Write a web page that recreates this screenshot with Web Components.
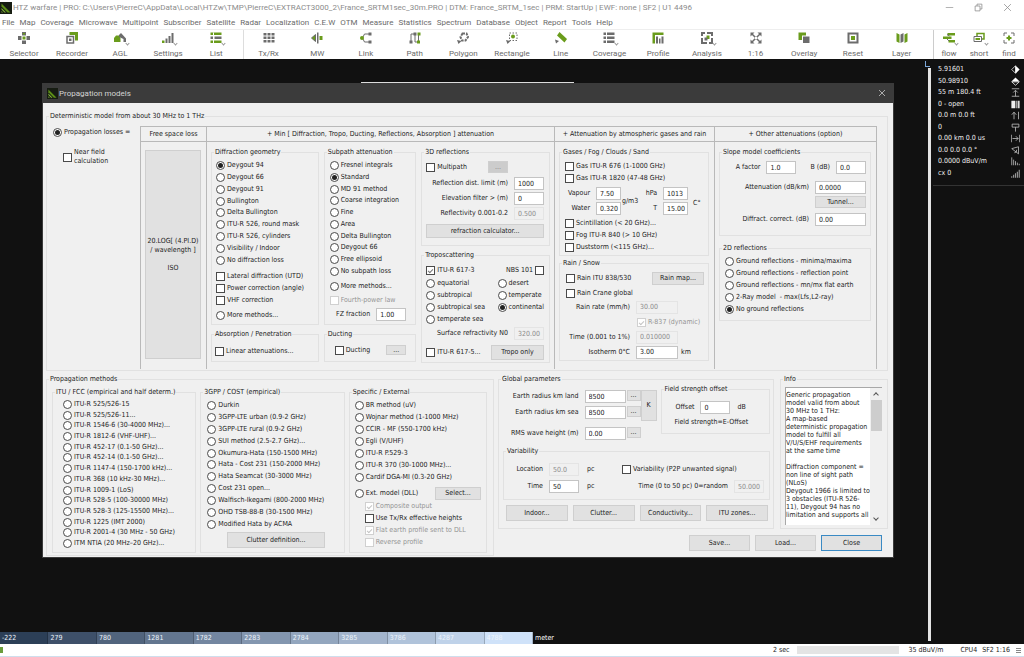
<!DOCTYPE html>
<html lang="en">
<head>
<meta charset="utf-8">
<title>HTZ warfare</title>
<style>
  html, body { margin: 0; height: 100%; background: #111; }
  body { font: 7px/9px "DejaVu Sans Condensed", "DejaVu Sans", sans-serif; color: #1c1c1c; }
</style>
</head>
<body>
<app-shell></app-shell>
<script>
const UI = '8px/11px Roboto, "Noto Sans", sans-serif';
const BASE = `
  *, *::before, *::after { box-sizing: border-box; }
  :host { display: block; }
  :host([hidden]) { display: none; }
  input, button, textarea { font: inherit; color: inherit; margin: 0; }
`;

function define(tag, css, html, init) {
  customElements.define(tag, class extends HTMLElement {
    constructor() {
      super();
      this.attachShadow({ mode: 'open' }).innerHTML = `<style>${BASE}${css}</style>${html}`;
    }
    connectedCallback() {
      if (init) init.call(this, this.shadowRoot);
    }
  });
}

/* ---------- icons ---------- */
const G = '#6a9c1c', D = '#6c6c6c';
const ICONS = {
  logo: `<rect width="24" height="24" fill="#161c12"/><path d="M3 3L21 21H15L3 9Z" fill="#5d8f16"/><path d="M3 12L12 21H9L3 15ZM3 18L6 21H3Z" fill="#86b93a"/>`,
  selector: `<path d="M8 0h8v7H8zM8 17h8v7H8z" fill="${D}"/><path d="M10 2h4v3h-4z" fill="${G}"/><path d="M0 8h7v8H0zM17 8h7v8h-7z" fill="${D}"/><path d="M9 9h6v6H9z" fill="${G}"/>`,
  recorder: `<path d="M7 0h17v17h-6V6H7z" fill="${G}"/><path d="M2 9h13v13H2z" fill="none" stroke="${D}" stroke-width="3"/><path d="M6 13h5v5H6z" fill="${D}"/>`,
  agl: `<path d="M0 20v-8l4-5h6l3 5v8z" fill="${G}"/><path d="M10 6l4-4 10 11v7h-5v-6l-9-4z" fill="${D}"/>`,
  settings: `<path d="M0 17h5v5H0z" fill="${G}"/><path d="M7 13h4v9H7zM13 8h4v14h-4zM19 2h4v20h-4z" fill="${D}"/>`,
  list: `<path d="M1 1h22v5H1zM1 17h22v5H1z" fill="${G}"/><path d="M1 9h6v5H1zM9 9h14v5H9z" fill="${D}"/><path d="M6 1h2v22H6z" fill="#fff"/>`,
  txrx: `<path d="M1 2h6v5H1zM9 2h6v5H9zM17 2h6v5h-6zM1 9h6v5H1zM9 9h6v5H9zM17 9h6v5h-6zM1 16h6v5H1zM9 16h6v5H9zM17 16h6v5h-6z" fill="${D}"/>`,
  mw: `<path d="M9 5v14L1 12z" fill="${G}" stroke="${D}" stroke-width="2"/><path d="M12 1h3v22h-3z" fill="${D}"/><path d="M17 8h6v8h-6z" fill="${G}"/>`,
  link: `<path d="M18 4H9L5 12l4 8h9" fill="none" stroke="${D}" stroke-width="2"/><circle cx="4" cy="12" r="4" fill="${G}"/><path d="M17 1h6v6h-6zM17 17h6v6h-6z" fill="${D}"/>`,
  path: `<path d="M4 20V4h8v16h7V4" fill="none" stroke="${D}" stroke-width="2"/><path d="M1 17h6v6H1zM9 1h6v6H9z" fill="${D}"/><path d="M17 1h6v6h-6zM16 17h6v6h-6z" fill="${G}"/>`,
  polygon: `<path d="M11 3h8l3 7-5 7h-7L7 10z" fill="none" stroke="${D}" stroke-width="4" stroke-dasharray="5 2"/><path d="M0 16l9 2-6 6z" fill="${D}"/>`,
  rectangle: `<path d="M7 2h15v15H7z" fill="none" stroke="${D}" stroke-width="2" stroke-dasharray="3 3"/><circle cx="14" cy="9" r="4" fill="${G}"/><path d="M0 16l9 2-6 6z" fill="${D}"/>`,
  line: `<path d="M9 0l15 14-5 7L4 7z" fill="${G}"/><path d="M0 15l8 3-6 5z" fill="${D}"/>`,
  coverage: `<path d="M1 1h5v5H1zM8 1h15v5H8zM1 9h5v5H1zM8 9h15v5H8zM1 17h5v5H1zM8 17h15v5H8z" fill="${D}"/>`,
  profile: `<path d="M1 1h22v5H6v17H1z" fill="${G}"/><path d="M8 9h4v14H8zM14 13h3v10h-3zM19 9h4v14h-4z" fill="${D}"/>`,
  analysis: `<path d="M2 8V2h6M12 2h10v6M22 12v10h-6M12 22H2V12" fill="none" stroke="${D}" stroke-width="4"/><path d="M11 7h6v7h-6z" fill="${G}"/><path d="M7 11h6v6H7z" fill="${D}"/>`,
  scale: `<path d="M4 4l16 16M20 4L4 20" stroke="${D}" stroke-width="3"/><path d="M1 1h8L1 9zM23 1v8l-8-8zM1 23v-8l8 8zM23 23h-8l8-8z" fill="${D}"/><path d="M10 10h4v4h-4z" fill="#fff"/>`,
  overlay: `<path d="M1 1h15v6H8v9H1z" fill="${G}"/><path d="M10 9h13v13H10z" fill="${D}"/>`,
  reset: `<path d="M3 3h18v18H3z" fill="none" stroke="${D}" stroke-width="4"/><path d="M8 8h8v8H8z" fill="${G}"/>`,
  layer: `<path d="M1 2l6 3v17l-6-3zM17 5l6-3v17l-6 3z" fill="${G}"/><path d="M9 5l6-3v17l-6 3z" fill="${D}"/>`,
  flow: `<path d="M9 2h15v5H9zM11 16h13v5H11z" fill="${G}"/><path d="M0 9h17v5H0z" fill="${G}"/><path d="M8 5l5 3M8 14l4 4" stroke="${D}" stroke-width="2"/>`,
  short: `<path d="M8 3h14v11H8z" fill="none" stroke="${G}" stroke-width="3"/><path d="M2 9h15v10H2z" fill="#fff" stroke="${D}" stroke-width="2"/><path d="M5 12h9v4H5z" fill="${G}"/>`,
  find: `<path d="M2 8V2h6M16 2h6v6M22 16v6h-6M8 22H2v-6" fill="none" stroke="${D}" stroke-width="2"/><path d="M10 7h4v3h3v4h-3v3h-4v-3H7v-4h3z" fill="${G}"/>`,
  min: `<path d="M2 12h20" stroke="#999" stroke-width="2"/>`,
  restore: `<path d="M3 8h13v13H3zM8 8V3h13v13h-5" fill="none" stroke="#888" stroke-width="2"/>`,
  close: `<path d="M3 3l18 18M21 3L3 21" stroke="currentColor" stroke-width="2"/>`,
  half: `<path d="M12 1l11 11-11 11z" fill="#fff"/><path d="M12 2L2 12l10 10z" fill="none" stroke="#fff" stroke-width="2"/>`,
  tophalf: `<path d="M12 1l11 11H1z" fill="#fff"/><path d="M2 13l10 9 10-9z" fill="none" stroke="#fff" stroke-width="2"/>`,
  up: `<path d="M2 2h20M2 22h20M12 22V7M6 12l6-6 6 6" fill="none" stroke="#ccc" stroke-width="2"/>`,
  bars: `<path d="M1 2h10v20H1z" fill="#eee"/><path d="M12 2h5v20h-5z" fill="#999"/><path d="M18 2h5v20h-5z" fill="#ddd"/>`,
  height: `<path d="M8 22V4M2 10l6-7 6 7M20 2v20" fill="none" stroke="#ccc" stroke-width="2"/>`,
  sign: `<path d="M3 3h18v8H3zM12 11v12" fill="none" stroke="#ccc" stroke-width="2"/>`,
  span: `<path d="M1 2v20M23 2v20M4 12h15M13 6l6 6-6 6" fill="none" stroke="#ccc" stroke-width="2"/>`,
  angle: `<path d="M2 7L20 2v19L2 7M9 18l5-2 1-6" fill="none" stroke="#ccc" stroke-width="2"/>`,
  falling: `<path d="M2 1v21M7 7v15M12 11v11M17 15v7M22 18v4" stroke="#ccc" stroke-width="2"/>`,
  rising: `<path d="M2 19v4M7 15v8M12 11v12M17 7v16M22 2v21" stroke="#999" stroke-width="3"/>`
};

customElements.define('ui-icon', class extends HTMLElement {
  static observedAttributes = ['name'];
  constructor() {
    super();
    this.attachShadow({ mode: 'open' }).innerHTML = `<style>
      :host { display: block; width: 12px; height: 12px; flex: none; }
      svg { display: block; width: 100%; height: 100%; }
    </style><svg viewBox="0 0 24 24" aria-hidden="true"></svg>`;
  }
  attributeChangedCallback(attr, old, value) {
    this.shadowRoot.querySelector('svg').innerHTML = ICONS[value] || '';
  }
});

/* ---------- form parts ---------- */
define('group-box', `
  fieldset { margin: 0; padding: 0; border: 1px solid #e1e1e1; min-width: 0; height: 100%; }
  legend { margin-left: 2px; padding: 0 1px; height: 9px; white-space: nowrap; }
`, `<fieldset><legend></legend><slot></slot></fieldset>`, function (root) {
  root.querySelector('legend').textContent = this.getAttribute('caption');
});

const CHOICE = `
  :host { display: flex; align-items: center; min-height: 10px; white-space: nowrap; }
  label { display: flex; align-items: center; gap: 2px; }
  :host([reverse]) label { flex-direction: row-reverse; }
  input { appearance: none; flex: none; width: 9px; height: 9px; border: 1px solid #4a4a4a;
          background: #fff; display: grid; place-items: center; }
  :host([disabled]) { color: #949494; }
  :host([disabled]) input { border-color: #d0d0d0; }
`;
function initChoice(root) {
  const input = root.querySelector('input');
  input.checked = this.hasAttribute('checked');
  input.disabled = this.hasAttribute('disabled');
}
define('radio-item', CHOICE + `
  input { border-radius: 50%; }
  input:checked::before { content: ""; width: 5px; height: 5px; border-radius: 50%; background: #222; }
`, `<label><input type="radio"><span><slot></slot></span></label>`, function (root) {
  initChoice.call(this, root);
  root.querySelector('input').onchange = () => {
    for (const other of this.getRootNode().querySelectorAll(`radio-item[name="${this.getAttribute('name')}"]`))
      if (other !== this) other.shadowRoot.querySelector('input').checked = false;
  };
});
define('check-item', CHOICE + `
  input:checked::before { content: ""; width: 5px; height: 3px; border: solid #777; border-width: 0 0 1px 1px;
                          transform: rotate(-45deg); }
  :host([disabled]) input:checked::before { border-color: #c4c4c4; }
`, `<label><input type="checkbox"><span><slot></slot></span></label>`, initChoice);

define('text-field', `
  :host { display: flex; align-items: center; justify-content: flex-end; white-space: nowrap; }
  label { display: flex; align-items: center; gap: 6px; }
  input { width: var(--field, 30px); height: 13px; padding: 0 0 0 3px; border: 1px solid #c4c4c4;
          border-radius: 0; background: #fff; }
  input:disabled { color: #8c8c8c; background: #f0f0f0; border-color: #e4e4e4; }
`, `<label><span><slot></slot></span><input type="text"></label>`, function (root) {
  const input = root.querySelector('input');
  input.value = this.getAttribute('value');
  input.disabled = this.hasAttribute('disabled');
});

define('push-button', `
  :host { min-width: 0; height: 16px; }
  button { display: block; width: 100%; height: 100%; padding: 0; border: 1px solid #cfcfcf; background: #e1e1e1;
           white-space: nowrap; text-align: center; }
  :host([default]) button { border-color: #3a8ac4; }
  :host([muted]) button { background: #cccccc; color: #888; }
  :host([multiline]) button { white-space: pre-line; }
`, `<button type="button"><slot></slot></button>`);

/* ---------- window chrome ---------- */
define('title-bar', `
  header { display: flex; align-items: center; height: 15px; background: #fff; color: #8c8c8c; font: ${UI}; }
  .title { flex: 1; margin-left: 1px; white-space: nowrap; overflow: hidden; }
  .controls { display: flex; gap: 20px; padding-right: 12px; }
  button { border: 0; padding: 0; background: none; color: #888; }
  .controls ui-icon { width: 9px; height: 9px; }
`, `<header><ui-icon name="logo"></ui-icon><span class="title"><slot></slot></span>
  <span class="controls"><button aria-label="Minimize"><ui-icon name="min"></ui-icon></button>
  <button aria-label="Restore"><ui-icon name="restore"></ui-icon></button>
  <button aria-label="Close"><ui-icon name="close"></ui-icon></button></span></header>`);

const MENUS = ['File', 'Map', 'Coverage', 'Microwave', 'Multipoint', 'Subscriber', 'Satellite', 'Radar', 'Localization',
  'C.E.W', 'OTM', 'Measure', 'Statistics', 'Spectrum', 'Database', 'Object', 'Report', 'Tools', 'Help'];
define('menu-bar', `
  nav { display: flex; gap: 5px; height: 14px; padding-left: 2px; align-items: center; background: #fff; }
  button { border: 0; padding: 0; background: none; color: #6a6a6a; font: ${UI}; }
`, `<nav>${MENUS.map(m => `<button>${m}</button>`).join('')}</nav>`);

define('tool-button', `
  :host { flex: 1 1 0; min-width: 0; }
  button { display: flex; flex-direction: column; align-items: center; gap: 4px; width: 100%; border: 0; padding: 2px 0 0;
           background: none; color: #6a6a6a; font: ${UI}; }
  .pic { display: flex; align-items: flex-end; position: relative; }
  i { display: none; position: absolute; left: 12px; bottom: -1px; width: 3px; height: 3px; border: solid #999;
      border-width: 0 1px 1px 0; transform: rotate(45deg); }
  :host([menu]) i { display: block; }
`, `<button type="button"><span class="pic"><ui-icon></ui-icon><i></i></span><span class="text"></span></button>`,
function (root) {
  root.querySelector('ui-icon').setAttribute('name', this.getAttribute('icon'));
  root.querySelector('.text').textContent = this.getAttribute('label');
});

const tool = ([icon, label, menu]) => `<tool-button icon="${icon}" label="${label}" ${menu ? 'menu' : ''}></tool-button>`;
define('tool-bar', `
  :host { display: flex; height: 30px; background: #fff; border-top: 1px solid #eee; }
  div { display: flex; }
  .a { flex: 243; padding-right: 3px; }
  .b { flex: 690; padding-right: 7px; border-left: 1px solid #ddd; }
  .c { flex: 91; border-left: 1px solid #ccc; }
`, `<div class="a">${[['selector', 'Selector'], ['recorder', 'Recorder'], ['agl', 'AGL', 1], ['settings', 'Settings', 1], ['list', 'List', 1]].map(tool).join('')}</div>
<div class="b">${[['txrx', 'Tx/Rx'], ['mw', 'MW'], ['link', 'Link'], ['path', 'Path'], ['polygon', 'Polygon'], ['rectangle', 'Rectangle'], ['line', 'Line'],
  ['coverage', 'Coverage', 1], ['profile', 'Profile'], ['analysis', 'Analysis', 1], ['scale', '1:16'], ['overlay', 'Overlay'], ['reset', 'Reset'], ['layer', 'Layer']].map(tool).join('')}</div>
<div class="c">${[['flow', 'flow', 1], ['short', 'short', 1], ['find', 'find']].map(tool).join('')}</div>`);

/* ---------- readout panel at the right ---------- */
const READOUT = [['5.91601', 'half'], ['50.98910', 'tophalf'], ['55 m 180.4 ft', 'up'], ['0 - open', 'bars'], ['0.0 m 0.0 ft', 'height'],
  ['0', 'sign'], ['0.00 km 0.0 us', 'span'], ['0.0 0.0 0.0 °', 'angle'], ['0.0000 dBuV/m', 'falling'], ['cx 0', 'rising']];
define('readout-panel', `
  :host { width: 91px; flex: none; background: #111; color: #f0f0f0; }
  .rows { display: grid; grid-auto-rows: 1fr; height: 127px; padding: 5px 4px 6px 5px; border-bottom: 1px solid #333; }
  .row { display: flex; justify-content: space-between; align-items: center; white-space: nowrap; }
  ui-icon { width: 9px; height: 9px; }
`, `<div class="rows">${READOUT.map(([t, i]) => `<div class="row"><span>${t}</span><ui-icon name="${i}"></ui-icon></div>`).join('')}</div>`);

/* ---------- elevation scale and status ---------- */
const STEPS = [['-222', '#2c3f57'], ['279', '#3e5069'], ['780', '#51647d'], ['1281', '#63768f'], ['1782', '#7386a0'], ['2283', '#8396af'],
  ['2784', '#93a6be'], ['3285', '#a2b4cc'], ['3786', '#b0c3da'], ['4287', '#bfd2e9'], ['4788', '#cfe2f9']];
define('elevation-scale', `
  :host { display: flex; gap: 2px; height: 12px; color: #fff; line-height: 13px; }
  ol { display: flex; width: 533px; margin: 0; padding: 0; list-style: none; }
  li { flex: 1; padding-left: 2px; border-right: 1px solid #0003; color: #eef4fb; }
`, `<ol>${STEPS.map(([t, c]) => `<li style="background:${c}">${t}</li>`).join('')}</ol><span>meter</span>`);

define('status-bar', `
  :host { display: flex; align-items: center; height: 13px; background: #fff; border-bottom: 1px solid #cfdeed; }
  .tick { width: 3px; height: 6px; background: #6a9c3c; }
  .fill { flex: 1; }
  progress { appearance: none; width: 102px; height: 8px; margin: 0 10px 0 7px; border: 0; background: #e4e4e4; }
  progress::-webkit-progress-bar { background: #e4e4e4; }
  .cpu { margin: 0 5px 0 17px; }
  .grip { margin: 0 3px 0 6px; width: 5px; height: 5px; background: repeating-linear-gradient(#888 0 1px, #fff 1px 2px); }
`, `<span class="tick"></span><span class="fill"></span><span>2 sec</span><progress value="0" max="100" aria-label="Progress"></progress>
<span>35 dBuV/m</span><span class="cpu">CPU4</span><span>SF2 1:16</span><span class="grip"></span>`);

/* ---------- dialog sections ---------- */
const LAYOUT = `
  .list { display: grid; grid-auto-rows: 1fr; padding-left: 5px; }
  .row { display: flex; align-items: center; justify-content: space-between; white-space: nowrap; }
  .stack { display: flex; flex-direction: column; }
`;
const radios = (name, items, picked = -1) =>
  items.map((t, i) => `<radio-item name="${name}" ${i === picked ? 'checked' : ''}>${t}</radio-item>`).join('');
const checks = items => items.map(t => `<check-item>${t}</check-item>`).join('');

define('diffraction-section', LAYOUT + `
  :host { display: grid; gap: 5px; grid-template-rows: 177px 32px; }
  .geo { height: 109px; padding-top: 3px; padding-left: 4px; }
  .opt { height: 35px; margin-top: 5px; padding-left: 4px; }
  .more { height: 12px; margin: 3px 0 0 4px; }
  .abs { height: 12px; margin: 6px 0 0 3px; }
`, `<group-box caption="Diffraction geometry">
  <div class="list geo">${radios('geo', ['Deygout 94', 'Deygout 66', 'Deygout 91', 'Bullington', 'Delta Bullington', 'ITU-R 526, round mask',
    'ITU-R 526, cylinders', 'Visibility / Indoor', 'No diffraction loss'], 0)}</div>
  <div class="list opt">${checks(['Lateral diffraction (UTD)', 'Power correction (angle)', 'VHF correction'])}</div>
  <radio-item class="more" name="geo">More methods...</radio-item>
</group-box>
<group-box caption="Absorption / Penetration"><check-item class="abs">Linear attenuations...</check-item></group-box>`);

define('subpath-section', LAYOUT + `
  :host { display: grid; gap: 5px; grid-template-rows: 177px 32px; }
  .sub { height: 120px; padding-top: 3px; }
  .more { height: 12px; margin: 3px 0 0 5px; }
  .law { height: 12px; margin: 2px 0 0 5px; }
  .fz { margin: 2px 9px 0 0; }
  .duct { height: 12px; margin-top: 5px; padding: 0 9px 0 10px; }
  .duct push-button { width: 20px; height: 10px; }
`, `<group-box caption="Subpath attenuation">
  <div class="list sub">${radios('sub', ['Fresnel integrals', 'Standard', 'MD 91 method', 'Coarse integration', 'Fine', 'Area', 'Delta Bullington',
    'Deygout 66', 'Free ellipsoid', 'No subpath loss'], 1)}</div>
  <radio-item class="more" name="sub">More methods...</radio-item>
  <check-item class="law" disabled>Fourth-power law</check-item>
  <text-field class="fz" value="1.00">FZ fraction</text-field>
</group-box>
<group-box caption="Ducting"><div class="row duct"><check-item>Ducting</check-item><push-button>...</push-button></div></group-box>`);

define('tropo-section', LAYOUT + `
  :host { display: grid; gap: 5px; grid-template-rows: 98px 112px; }
  .pad { padding: 4px 5px 0 4px; gap: 2px; }
  .multi { height: 12px; margin-bottom: 2px; padding-right: 36px; }
  .multi push-button { width: 20px; height: 12px; }
  .calc { height: 14px; margin-top: 2px; }
  .row { height: 12px; }
  .zones { display: grid; grid-template-columns: 72fr 46fr; grid-auto-rows: 1fr; height: 47px; }
  .end { height: 15px; margin-top: 3px; }
  .end push-button { width: 53px; height: 15px; }
`, `<group-box caption="3D reflections"><div class="stack pad">
  <div class="row multi"><check-item>Multipath</check-item><push-button muted>...</push-button></div>
  <text-field value="1000">Reflection dist. limit (m)</text-field>
  <text-field value="0">Elevation filter &gt; (m)</text-field>
  <text-field value="0.500" disabled>Reflectivity 0.001-0.2</text-field>
  <push-button class="calc">refraction calculator...</push-button>
</div></group-box>
<group-box caption="Troposcattering"><div class="stack pad">
  <div class="row"><check-item checked>ITU-R 617-3</check-item><check-item reverse>NBS 101</check-item></div>
  <div class="zones">
    <radio-item name="zone">equatorial</radio-item><radio-item name="zone">desert</radio-item>
    <radio-item name="zone">subtropical</radio-item><radio-item name="zone">temperate</radio-item>
    <radio-item name="zone">subtropical sea</radio-item><radio-item name="zone" checked>continental</radio-item>
    <radio-item name="zone">temperate sea</radio-item>
  </div>
  <text-field value="320.00" disabled>Surface refractivity N0</text-field>
  <div class="row end"><check-item>ITU-R 617-5...</check-item><push-button>Tropo only</push-button></div>
</div></group-box>`);

define('gas-section', LAYOUT + `
  :host { display: grid; gap: 3px; grid-template-rows: 108px 102px; }
  .gas { height: 27px; padding-top: 3px; }
  .air { display: grid; grid-template: 13px 13px / 56px 22px 1fr 20px; row-gap: 2px; align-items: center; padding-left: 5px;
         margin: 3px 0; --field: 25px; }
  .air .span { grid-row: 1 / 3; grid-column: 2; padding-left: 1px; }
  .air .unit { grid-row: 1 / 3; grid-column: 4; padding: 4px 0 0 5px; }
  .air .l { grid-column: 1; } .air .r { grid-column: 3; }
  .wx { height: 35px; }
  .rain { padding: 4px 4px 0 6px; gap: 3px; }
  .rain .row { height: 13px; }
  .rain push-button { width: 52px; height: 13px; }
  .rain text-field { --field: 42px; margin-right: 26px; height: 12px; }
  .rain .dyn { height: 12px; margin-left: 71px; }
  .iso { display: flex; align-items: center; }
  .iso text-field { flex: 1; margin-right: 3px; }
  .iso span { width: 23px; }
`, `<group-box caption="Gases / Fog / Clouds / Sand">
  <div class="list gas">${checks(['Gas ITU-R 676 (1-1000 GHz)', 'Gas ITU-R 1820 (47-48 GHz)'])}</div>
  <div class="air">
    <text-field class="l" value="7.50">Vapour</text-field><text-field class="r" value="1013">hPa</text-field>
    <text-field class="l" value="0.320">Water</text-field><text-field class="r" value="15.00">T</text-field>
    <span class="span">g/m3</span><span class="unit">C°</span>
  </div>
  <div class="list wx">${checks(['Scintillation (&lt; 20 GHz)...', 'Fog ITU-R 840 (&gt; 10 GHz)', 'Duststorm (&lt;115 GHz)...'])}</div>
</group-box>
<group-box caption="Rain / Snow"><div class="stack rain">
  <div class="row"><check-item>Rain ITU 838/530</check-item><push-button>Rain map...</push-button></div>
  <check-item>Rain Crane global</check-item>
  <text-field value="30.00" disabled>Rain rate (mm/h)</text-field>
  <check-item class="dyn" checked disabled>R-837 (dynamic)</check-item>
  <text-field value="0.010000" disabled>Time (0.001 to 1%)</text-field>
  <div class="iso"><text-field value="3.00">Isotherm 0°C</text-field><span>km</span></div>
</div></group-box>`);

define('slope-section', LAYOUT + `
  :host { display: grid; gap: 8px; grid-template-rows: 88px 77px; }
  .pad { padding: 4px 4px 0 0; gap: 2px; }
  .ab { justify-content: flex-end; gap: 14px; margin-bottom: 5px; }
  .wide { --field: 51px; }
  push-button { width: 51px; height: 12px; align-self: flex-end; margin-bottom: 3px; }
  .list { height: 62px; padding-top: 3px; }
`, `<group-box caption="Slope model coefficients"><div class="stack pad">
  <div class="row ab"><text-field value="1.0">A factor</text-field><text-field value="0.0">B (dB)</text-field></div>
  <text-field class="wide" value="0.0000">Attenuation (dB/km)</text-field>
  <push-button>Tunnel...</push-button>
  <text-field class="wide" value="0.00">Diffract. correct. (dB)</text-field>
</div></group-box>
<group-box caption="2D reflections"><div class="list">${radios('ground', ['Ground reflections - minima/maxima', 'Ground reflections - reflection point',
  'Ground reflections - mn/mx flat earth', '2-Ray model &nbsp;- max(Lfs,L2-ray)', 'No ground reflections'], 4)}</div></group-box>`);

define('loss-section', LAYOUT + `
  .grid { display: grid; grid-template-columns: 93fr 66fr 348fr 160fr 163fr; margin: 5px 10px 1px 0; }
  .intro { padding: 1px 0 0 6px; }
  .near { margin: 11px 0 0 10px; }
  .near span { display: block; white-space: pre; }
  .cell { display: grid; grid-template-rows: 15px 1fr; border: solid #b9b9b9; border-width: 1px 0 0 1px; min-width: 0; }
  .cell:last-child { border-right-width: 1px; }
  h3 { margin: 0; font: inherit; line-height: 15px; text-align: center; white-space: nowrap; border-bottom: 1px solid #b9b9b9; }
  .body { padding: 6px 5px 6px 4px; }
  .free { padding: 8px 5px 10px 4px; }
  .free push-button { height: 100%; }
  .mix { display: grid; grid-template-columns: 107fr 92fr 128fr; gap: 5px; padding-right: 4px; }
`, `<group-box caption="Deterministic model from about 30 MHz to 1 THz"><div class="grid">
  <div class="intro"><radio-item name="model" checked>Propagation losses =</radio-item>
    <check-item class="near"><span>Near field
calculation</span></check-item></div>
  <div class="cell"><h3>Free space loss</h3><div class="free"><push-button multiline>20.LOG[ (4.PI.D)
/ wavelength ]

ISO</push-button></div></div>
  <div class="cell"><h3>+ Min [ Diffraction, Tropo, Ducting, Reflections, Absorption ] attenuation</h3>
    <div class="body mix"><diffraction-section></diffraction-section><subpath-section></subpath-section><tropo-section></tropo-section></div></div>
  <div class="cell"><h3>+ Attenuation by atmospheric gases and rain</h3><div class="body"><gas-section></gas-section></div></div>
  <div class="cell"><h3>+ Other attenuations (option)</h3><div class="body"><slope-section></slope-section></div></div>
</div></group-box>`);

define('method-section', LAYOUT + `
  .cols { display: grid; grid-template-columns: 144fr 144fr 138fr; gap: 4px; padding: 4px 6px 2px 5px; }
  .itu { height: 150px; margin: 2px 0 3px; padding-left: 10px; }
  .cost { height: 130px; margin-top: 3px; padding-left: 6px; }
  .cost + push-button { margin: 2px 19px 0 26px; }
  .spec { height: 83px; margin-top: 3px; }
  .dll { height: 13px; margin: 4px 5px 0; }
  .dll push-button { width: 46px; height: 13px; }
  .out { height: 47px; padding-left: 15px; margin-top: 1px; }
`, `<group-box caption="Propagation methods"><div class="cols">
  <group-box caption="ITU / FCC (empirical and half determ.)"><div class="list itu">${radios('model', ['ITU-R 525/526-15', 'ITU-R 525/526-11...',
    'ITU-R 1546-6 (30-4000 MHz)...', 'ITU-R 1812-6 (VHF-UHF)...', 'ITU-R 452-17 (0.1-50 GHz)...', 'ITU-R 452-14 (0.1-50 GHz)...',
    'ITU-R 1147-4 (150-1700 kHz)...', 'ITU-R 368 (10 kHz-30 MHz)...', 'ITU-R 1009-1 (LoS)', 'ITU-R 528-5 (100-30000 MHz)',
    'ITU-R 528-3 (125-15500 MHz)...', 'ITU-R 1225 (IMT 2000)', 'ITU-R 2001-4 (30 MHz - 50 GHz)', 'ITM NTIA (20 MHz–20 GHz)...'])}</div></group-box>
  <group-box caption="3GPP / COST (empirical)"><div class="list cost">${radios('model', ['Durkin', '3GPP-LTE urban (0.9-2 GHz)',
    '3GPP-LTE rural (0.9-2 GHz)', 'SUI method (2.5-2.7 GHz)...', 'Okumura-Hata (150-1500 MHz)', 'Hata - Cost 231 (150-2000 MHz)',
    'Hata Seamcat (30-3000 MHz)', 'Cost 231 open...', 'Walfisch-Ikegami (800-2000 MHz)', 'OHD TSB-88-B (30-1500 MHz)',
    'Modified Hata by ACMA'])}</div><push-button>Clutter definition...</push-button></group-box>
  <group-box caption="Specific / External"><div class="list spec">${radios('model', ['BR method (uV)', 'Wojnar method (1-1000 MHz)',
    'CCIR - MF (550-1700 kHz)', 'Egli (V/UHF)', 'ITU-R P.529-3', 'ITU-R 370 (30-1000 MHz)...', 'Cardif DGA-MI (0.3-20 GHz)'])}</div>
    <div class="row dll"><radio-item name="model">Ext. model (DLL)</radio-item><push-button>Select...</push-button></div>
    <div class="list out"><check-item checked disabled>Composite output</check-item><check-item>Use Tx/Rx effective heights</check-item>
      <check-item checked disabled>Flat earth profile sent to DLL</check-item><check-item disabled>Reverse profile</check-item></div>
  </group-box>
</div></group-box>`);

define('global-section', LAYOUT + `
  .pad { padding: 1px 3px 7px 4px; }
  .top { display: grid; grid-template-columns: 137fr 16fr 113fr; }
  .earth { display: grid; grid-template-columns: 1fr 15px; grid-template-rows: 13px 13px 13px; row-gap: 3px; padding-top: 5px;
           --field: 41px; align-items: start; }
  .earth push-button { height: 11px; margin-left: 1px; }
  .rms { margin-top: 5px; }
  .k { height: 31px; margin-top: 5px; }
  .offset { margin: 0 0 7px 4px; height: 49px; }
  .offset .f { display: flex; align-items: center; gap: 7px; padding: 7px 0 4px 14px; }
  .offset p { margin: 0 0 0 13px; }
  .vary { margin-top: 6px; }
  .vary .in { display: grid; grid-template-columns: 75px 43px 1fr; align-items: center; grid-template-rows: 15px 15px; row-gap: 2px; padding: 6px 5px 5px 0; }
  .vary .in > span { padding-left: 8px; }
  .btns { display: grid; grid-template-columns: repeat(4, 1fr); gap: 5px; padding: 5px 2px 0 3px; }
`, `<group-box caption="Global parameters"><div class="pad">
  <div class="top">
    <div class="earth">
      <text-field value="8500">Earth radius km land</text-field><push-button>...</push-button>
      <text-field value="8500">Earth radius km sea</text-field><push-button>...</push-button>
      <text-field class="rms" value="0.00">RMS wave height (m)</text-field><push-button class="rms">...</push-button>
    </div>
    <push-button class="k">K</push-button>
    <group-box class="offset" caption="Field strength offset">
      <div class="f"><text-field value="0">Offset</text-field><span>dB</span></div><p>Field strength=E-Offset</p>
    </group-box>
  </div>
  <group-box class="vary" caption="Variability"><div class="in">
    <text-field value="50.0" disabled>Location</text-field><span>pc</span><check-item>Variability (P2P unwanted signal)</check-item>
    <text-field value="50">Time</text-field><span>pc</span><text-field value="50.000" disabled>Time (0 to 50 pc) 0=random</text-field>
  </div></group-box>
  <div class="btns"><push-button>Indoor...</push-button><push-button>Clutter...</push-button><push-button>Conductivity...</push-button><push-button>ITU zones...</push-button></div>
</div></group-box>`);

define('info-section', `
  .box { display: flex; height: 138px; margin: 3px 5px 3px 4px; border: 1px solid #a8a8a8; border-width: 1px 0 0 1px; background: #fff; }
  textarea { flex: 1; min-width: 0; padding: 3px 0 0 0; border: 0; resize: none; overflow: hidden; background: none; line-height: 8px; }
  .bar { display: flex; flex-direction: column; align-items: center; width: 12px; background: #f0f0f0; }
  .bar b { width: 11px; height: 31px; background: #cdcdcd; }
  .bar i { width: 4px; height: 4px; margin: 5px 0 3px; border: solid #555; border-width: 1px 0 0 1px; transform: rotate(45deg); }
  .bar i:last-child { margin: auto 0 5px; transform: rotate(225deg); }
`, `<group-box caption="Info"><div class="box"><textarea aria-label="Info" readonly>Generic propagation
model valid from about
30 MHz to 1 THz:
A map-based
deterministic propagation
model to fulfill all
V/U/S/EHF requirements
at the same time

Diffraction component =
non line of sight path
(NLoS)
Deygout 1966 is limited to
3 obstacles (ITU-R 526-
11), Deygout 94 has no
limitation and supports all</textarea><div class="bar"><i></i><b></b><i></i></div></div></group-box>`);

define('propagation-dialog', `
  :host { background: #f0f0f0; border: 1px solid #3b3b3b; border-top: 0; }
  header { display: flex; align-items: center; gap: 1px; height: 20px; padding: 0 7px 0 4px; background: #3b3b3b; color: #d4d4d4; font: ${UI}; }
  header span { flex: 1; }
  header ui-icon { width: 11px; height: 11px; }
  header button { padding: 0; border: 0; background: none; color: #e4e4e4; }
  header button ui-icon { width: 8px; height: 8px; }
  form { padding: 9px 5px 1px 3px; }
  .lower { display: grid; grid-template-columns: 448fr 390fr; gap: 4px; margin-top: 4px; }
  .pair { display: grid; grid-template-columns: 276fr 108fr; gap: 6px; }
  .actions { display: flex; justify-content: flex-end; gap: 5px; padding: 6px 6px 0 0; }
  .actions push-button { width: 61px; }
`, `<header><ui-icon name="logo"></ui-icon><span>Propagation models</span><button aria-label="Close"><ui-icon name="close"></ui-icon></button></header>
<form><loss-section></loss-section>
  <div class="lower"><method-section></method-section>
    <div><div class="pair"><global-section></global-section><info-section></info-section></div>
      <div class="actions"><push-button>Save...</push-button><push-button>Load...</push-button><push-button default>Close</push-button></div></div>
  </div></form>`);

define('app-shell', `
  :host { display: flex; flex-direction: column; min-height: 100vh; background: #111; }
  main { flex: 1; display: flex; }
  .map { flex: 1; min-width: 0; display: flex; flex-direction: column; padding-top: 23px; }
  .trace { width: 23%; height: 1px; margin-left: 39%; background: #ddd; }
  propagation-dialog { margin: 0 31px 0 42px; }
  elevation-scale { margin-top: auto; }
  .edge { width: 8px; padding: 9px 2px 3px 3px; display: flex; position: relative; }
  .edge b { flex: 1; background: #e4e4e4; }
  .edge i { position: absolute; left: 0; top: 2px; width: 5px; height: 6px; border: solid #7aa6d8; border-width: 0 0 1px 1px; }
`, `<title-bar>HTZ warfare | PRO: C:\\Users\\PierreC\\AppData\\Local\\HTZw\\TMP\\PierreC\\EXTRACT3000_2\\France_SRTM1sec_30m.PRO | DTM: France_SRTM_1sec | PRM: StartUp | EWF: none | SF2 | U1 4496</title-bar>
<menu-bar></menu-bar><tool-bar></tool-bar>
<main><div class="map"><div class="trace"></div><propagation-dialog></propagation-dialog><elevation-scale></elevation-scale></div>
<div class="edge"><i></i><b></b></div><readout-panel></readout-panel></main>
<status-bar></status-bar>`);
</script>
</body>
</html>
